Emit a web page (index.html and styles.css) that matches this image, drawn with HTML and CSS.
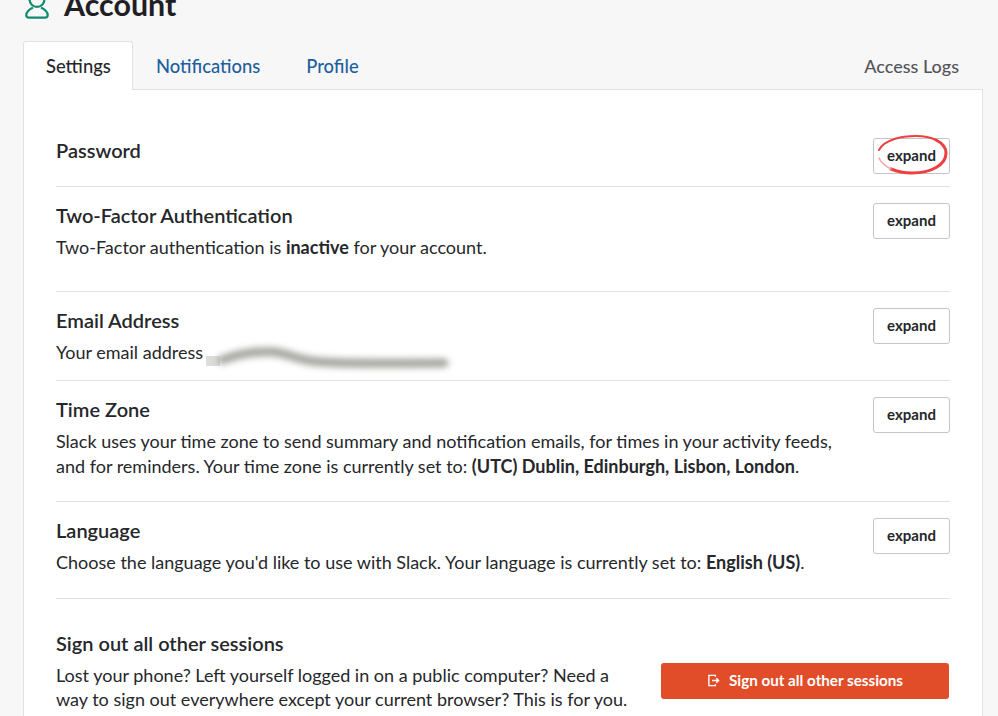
FILE: index.html
```html
<!DOCTYPE html>
<html lang="en">
<head>
<meta charset="utf-8">
<title>Account</title>
<link rel="stylesheet" href="styles.css">
</head>
<body>
<div class="page">
  <header class="title">
    <svg class="user-icon" viewBox="0 0 26 28" width="26" height="28" fill="none" stroke="#118a6e" stroke-width="2.2">
      <circle cx="13" cy="8.5" r="7.4"/>
      <path d="M9 16.5 C5 18.5 2.3 21 2.3 24 C2.3 26 3.5 26.7 5 26.7 H21 C22.5 26.7 23.7 26 23.7 24 C23.7 21 21 18.5 17 16.5"/>
    </svg>
    <h1>Account</h1>
  </header>
  <nav class="tabs">
    <a class="tab active">Settings</a>
    <a class="tab">Notifications</a>
    <a class="tab">Profile</a>
    <a class="logs">Access Logs</a>
  </nav>
  <main class="panel">
    <section class="row first">
      <div class="info"><h2>Password</h2></div>
      <div class="btn-wrap">
        <button class="expand">expand</button>
        <svg class="circle" viewBox="0 0 74 44" width="74" height="44" fill="none">
          <path d="M4 17 C9 7 26 3 41 3 C49 3 56 4.5 61 7" stroke="#ef3f3f" stroke-width="2" stroke-linecap="round"/>
          <path d="M61 7 C67 10 71 14 71 20 C71 32 56 40 37 40 C29 40 22 38.5 16 36" stroke="#ef3f3f" stroke-width="3" stroke-linecap="round"/>
          <path d="M16 36 C10 33 6 30 4 25" stroke="#f7a5a5" stroke-width="1.6" stroke-linecap="round"/>
        </svg>
      </div>
    </section>
    <section class="row two">
      <div class="info">
        <h2>Two-Factor Authentication</h2>
        <p>Two-Factor authentication is <b>inactive</b> for your account.</p>
      </div>
      <button class="expand">expand</button>
    </section>
    <section class="row email">
      <div class="info">
        <h2>Email Address</h2>
        <p>Your email address</p>
        <svg class="smear" viewBox="0 0 320 50" width="320" height="50" fill="none">
          <defs><filter id="blur" x="-10%" y="-120%" width="120%" height="340%"><feGaussianBlur stdDeviation="3.2"/></filter></defs>
          <path d="M6 25 H20" stroke="#dcdcd8" stroke-width="10"/>
          <path d="M22 24 C38 18 56 15 74 16 C92 18 98 25 122 26 C150 28 200 27 244 27" stroke="#a5a5a0" stroke-width="9" stroke-linecap="round" filter="url(#blur)"/>
        </svg>
      </div>
      <button class="expand">expand</button>
    </section>
    <section class="row zone">
      <div class="info">
        <h2>Time Zone</h2>
        <p>Slack uses your time zone to send summary and notification emails, for times in your activity feeds, and for reminders. Your time zone is currently set to: <b>(UTC) Dublin, Edinburgh, Lisbon, London</b>.</p>
      </div>
      <button class="expand">expand</button>
    </section>
    <section class="row lang">
      <div class="info">
        <h2>Language</h2>
        <p>Choose the language you'd like to use with Slack. Your language is currently set to: <b>English (US)</b>.</p>
      </div>
      <button class="expand">expand</button>
    </section>
    <section class="row signout">
      <div class="info narrow">
        <h2>Sign out all other sessions</h2>
        <p>Lost your phone? Left yourself logged in on a public computer? Need a way to sign out everywhere except your current browser? This is for you.</p>
      </div>
      <button class="danger">
        <svg viewBox="0 0 14 14" width="13" height="13" fill="none" stroke="#fff" stroke-width="1.5">
          <path d="M9 3 V1.5 H2 V12.5 H9 V11"/>
          <path d="M5.5 7 H12.5 M10 4.5 L12.5 7 L10 9.5"/>
        </svg>
        <span>Sign out all other sessions</span>
      </button>
    </section>
  </main>
</div>
</body>
</html>
```

FILE: styles.css
```css
* { box-sizing: border-box; }
html, body { margin: 0; padding: 0; height: 716px; overflow: hidden; }
body {
  background: #f7f7f7;
  color: #26272b;
  font-family: Lato, "Liberation Sans", sans-serif;
}
.page { padding-left: 23px; padding-right: 15px; }
.title {
  display: flex;
  align-items: center;
  height: 41px;
  margin-top: -16px;
  margin-bottom: 16px;
  padding-left: 1px;
}
.user-icon { margin-right: 14px; margin-top: 1px; flex: none; }
.title h1 {
  margin: 0;
  font-size: 30.4px;
  line-height: 41px;
  font-weight: 700;
  color: #1f2024;
}
.tabs {
  display: flex;
  align-items: flex-start;
  height: 49px;
  position: relative;
  z-index: 1;
}
.tab {
  display: block;
  height: 49px;
  padding: 0 22px;
  line-height: 48px;
  font-size: 18.4px;
  font-weight: 500;
  color: #1e5f9f;
  border: 1px solid transparent;
  border-bottom: 0;
}
.tab.active {
  background: #fff;
  color: #26272b;
  border-color: #e2e2e2;
  border-radius: 3px 3px 0 0;
  width: 110px;
  white-space: nowrap;
}
.logs {
  margin-left: auto;
  padding-right: 24px;
  line-height: 50px;
  font-size: 18px;
  font-weight: 500;
  color: #555459;
}
.panel {
  background: #fff;
  border: 1px solid #e2e2e2;
  margin-top: -1px;
  padding: 31px 32px 0 32px;
  height: 700px;
}
.row {
  display: flex;
  justify-content: space-between;
  align-items: flex-start;
  border-bottom: 1px solid #e2e2e2;
  padding-top: 16px;
}
.row.first { height: 66px; padding-top: 17px; }
.row.two { height: 105px; }
.row.email { height: 89px; }
.row.zone { height: 121px; }
.row.lang { height: 97px; }
.row.signout {
  border-bottom: 0;
  padding-top: 32px;
}
.first .info { margin-top: -1px; }
.row:not(.first) h2 { margin-top: -1px; }
.info { position: relative; }
.info h2 {
  margin: 0;
  font-size: 20px;
  line-height: 26px;
  font-weight: 600;
  color: #26272b;
}
.info p {
  margin: 7px 0 0;
  font-size: 18px;
  line-height: 25px;
  max-width: 790px;
}
.info b { font-weight: 700; }
.narrow { width: 580px; }
.narrow p { margin-top: 7px; line-height: 24px; }
.expand {
  width: 77px;
  height: 36px;
  padding: 0 0 2px;
  flex: none;
  background: #fff;
  border: 1px solid #c5c5c5;
  border-radius: 3px;
  font-family: inherit;
  font-size: 15px;
  font-weight: 700;
  color: #26272b;
}
.btn-wrap { position: relative; height: 36px; }
.circle { position: absolute; left: 2px; top: -5px; }
.smear { position: absolute; left: 144px; top: 28px; }
.danger {
  display: flex;
  align-items: center;
  justify-content: center;
  gap: 9px;
  flex: none;
  width: 288px;
  height: 36px;
  margin: 32px 1px 0 0;
  padding: 0 0 2px;
  background: #e14d28;
  border: 0;
  border-radius: 3px;
  color: #fff;
  font-family: inherit;
  font-size: 15.2px;
  font-weight: 700;
}
```
